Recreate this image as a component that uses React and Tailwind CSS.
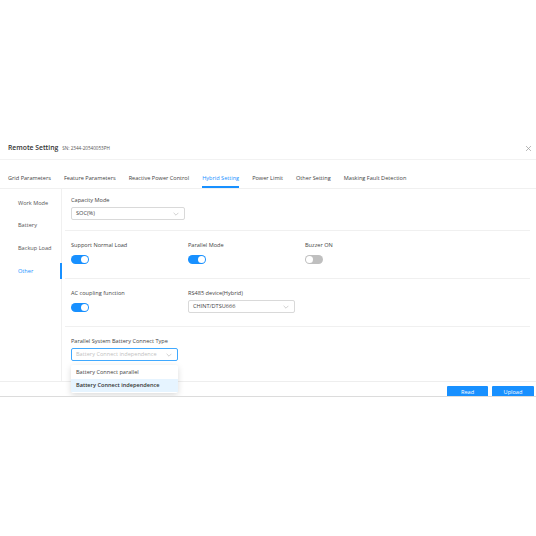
import { useState } from 'react';

const tabs = [
    "Grid Parameters",
    "Feature Parameters",
    "Reactive Power Control",
    "Hybrid Setting",
    "Power Limit",
    "Other Setting",
    "Masking Fault Detection",
];

const menu = ["Work Mode", "Battery", "Backup Load", "Other"];

function Chevron() {
    return (
        <svg width="6" height="4" viewBox="0 0 10 6" fill="none" stroke="#bfbfbf" strokeWidth="1.2">
            <path d="M1 1l4 4 4-4" />
        </svg>
    );
}

function Toggle({ on }) {
    return (
        <div className={`w-[18px] h-[9px] mt-[1px] rounded-full flex items-center px-[1px] ${on ? 'bg-[#1890ff] justify-end' : 'bg-[#bfbfbf] justify-start'}`}>
            <div className="w-[7px] h-[7px] rounded-full bg-white" />
        </div>
    );
}

function Select({ value, width, active, placeholder }) {
    return (
        <div
            className={`h-[13px] rounded-[2px] border flex items-center justify-between pl-[4px] pr-[5px] bg-white ${active ? 'border-[#40a9ff]' : 'border-[#d9d9d9]'} ${width}`}
        >
            <span className={placeholder ? 'text-[#bfbfbf]' : 'text-[#444]'}>{value}</span>
            <Chevron />
        </div>
    );
}

function Field({ label, children }) {
    return (
        <div className="w-[117px] flex flex-col">
            <div className="h-[8px] leading-[8px] text-[#444]">{label}</div>
            <div className="h-[13px] mt-[3px] flex items-center">{children}</div>
        </div>
    );
}

export default function App() {
    const [tab] = useState("Hybrid Setting");
    const [side] = useState("Other");

    return (
        <div className="w-[536px] h-[536px] bg-white pt-[137px] text-[5.6px]" style={{ fontFamily: '"Open Sans", "Noto Sans", sans-serif' }}>
            <div className="h-[260px] border-b border-[#dcdcdc] overflow-hidden flex flex-col">
                {/* header */}
                <div className="h-[23px] shrink-0 border-b border-[#f2f2f2] flex items-center pl-[8px] pr-[4px]">
                    <span className="text-[6.8px] font-semibold text-[#333]">Remote Setting</span>
                    <span className="ml-[4px] text-[4.6px] text-[#555]">SN: 2344-20540053PH</span>
                    <svg className="ml-auto" width="7" height="7" viewBox="0 0 10 10" stroke="#999" strokeWidth="1">
                        <path d="M1.5 1.5l7 7M8.5 1.5l-7 7" />
                    </svg>
                </div>

                {/* tab bar */}
                <div className="h-[29px] shrink-0 border-b border-[#f0f0f0] flex items-end pl-[8px] gap-[13px]">
                    {tabs.map((t) => (
                        <div
                            key={t}
                            className={`leading-[8px] pb-[4px] border-b-[2px] ${t === tab ? 'text-[#1890ff] border-[#1890ff]' : 'text-[#444] border-transparent'}`}
                        >
                            {t}
                        </div>
                    ))}
                </div>

                {/* body */}
                <div className="flex flex-1 relative">
                    <div className="w-[62px] border-r border-[#f0f0f0] pt-[6px] flex flex-col gap-[6.7px]">
                        {menu.map((m) => (
                            <div
                                key={m}
                                className={`h-[16px] flex items-center pl-[18px] -mr-[1px] ${m === side ? 'text-[#1890ff] border-r-[2px] border-[#1890ff]' : 'text-[#555]'}`}
                            >
                                {m}
                            </div>
                        ))}
                    </div>

                    <div className="flex-1 flex flex-col">
                        <div className="h-[42px] border-b border-[#f0f0f0] ml-[3px] pl-[6px] pt-[7px] mr-[6px]">
                            <Field label="Capacity Mode">
                                <Select value="SOC(%)" width="w-[114px] shrink-0" />
                            </Field>
                        </div>

                        <div className="h-[48px] border-b border-[#f0f0f0] ml-[3px] pl-[6px] pt-[10px] mr-[6px] flex">
                            <Field label="Support Normal Load"><Toggle on /></Field>
                            <Field label="Parallel Mode"><Toggle on /></Field>
                            <Field label="Buzzer ON"><Toggle /></Field>
                        </div>

                        <div className="h-[48px] border-b border-[#f0f0f0] ml-[3px] pl-[6px] pt-[10px] mr-[6px] flex">
                            <Field label="AC coupling function"><Toggle on /></Field>
                            <Field label="RS485 device(Hybrid)">
                                <Select value="CHINT/DTSU666" width="w-[107px]" />
                            </Field>
                        </div>

                        <div className="h-[54px] ml-[3px] pl-[6px] pt-[10px] relative">
                            <Field label="Parallel System Battery Connect Type">
                                <Select value="Battery Connect independence" width="w-[107px]" active placeholder />
                            </Field>
                            <div className="absolute left-[6px] top-[38px] w-[107px] bg-white rounded-[2px] shadow-[0_2px_6px_rgba(0,0,0,0.15)] py-[1px] z-10">
                                <div className="h-[13px] flex items-center pl-[5px] text-[#444]">Battery Connect parallel</div>
                                <div className="h-[13px] flex items-center pl-[5px] text-[#333] font-semibold bg-[#e6f4ff]">Battery Connect independence</div>
                            </div>
                        </div>
                    </div>
                </div>

                {/* footer */}
                <div className="h-[17px] shrink-0 border-t border-[#eeeeee] flex items-end justify-end gap-[4px] pr-[2px]">
                    <button className="w-[41px] h-[12px] bg-[#1890ff] text-white text-[5.6px] rounded-[1px]">Read</button>
                    <button className="w-[42px] h-[12px] bg-[#1890ff] text-white text-[5.6px] rounded-[1px]">Upload</button>
                </div>
            </div>
        </div>
    );
}
